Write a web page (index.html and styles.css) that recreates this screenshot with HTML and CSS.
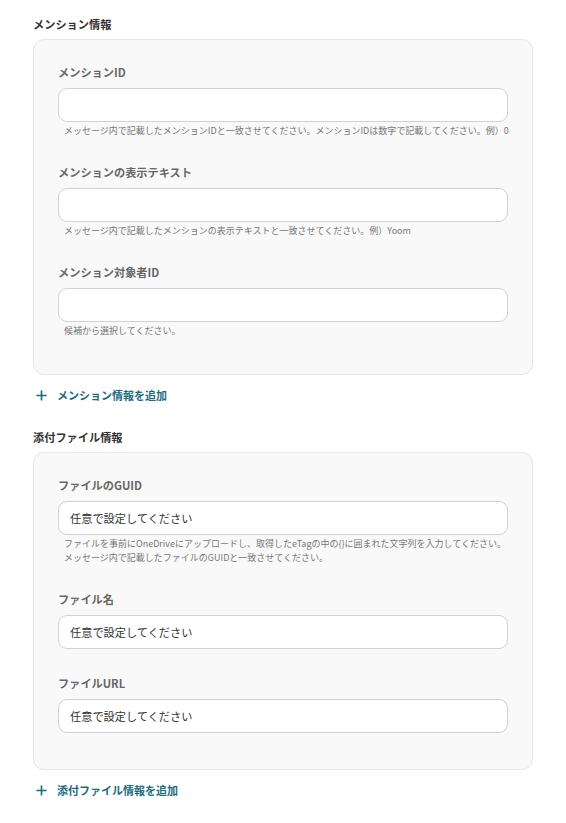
FILE: index.html
```html
<!DOCTYPE html>
<html lang="ja">
<head>
<meta charset="utf-8">
<link rel="stylesheet" href="styles.css">
</head>
<body>
<div class="page">
  <section class="group">
    <h2 class="group-title">メンション情報</h2>
    <div class="card">
      <div class="field">
        <label class="field-label">メンションID</label>
        <div class="input"></div>
        <p class="help">メッセージ内で記載したメンションIDと一致させてください。メンションIDは数字で記載してください。例）0</p>
      </div>
      <div class="field">
        <label class="field-label">メンションの表示テキスト</label>
        <div class="input"></div>
        <p class="help">メッセージ内で記載したメンションの表示テキストと一致させてください。例）Yoom</p>
      </div>
      <div class="field">
        <label class="field-label">メンション対象者ID</label>
        <div class="input"></div>
        <p class="help">候補から選択してください。</p>
      </div>
    </div>
    <a class="add-link">
      <svg class="plus" viewBox="0 0 12 12" width="12" height="12"><path d="M6 0.5v11M0.5 6h11" stroke="currentColor" stroke-width="1.8" fill="none"/></svg>
      <span>メンション情報を追加</span>
    </a>
  </section>

  <section class="group">
    <h2 class="group-title">添付ファイル情報</h2>
    <div class="card">
      <div class="field">
        <label class="field-label">ファイルのGUID</label>
        <div class="input"><span class="placeholder">任意で設定してください</span></div>
        <p class="help">ファイルを事前にOneDriveにアップロードし、取得したeTagの中の{}に囲まれた文字列を入力してください。<br>メッセージ内で記載したファイルのGUIDと一致させてください。</p>
      </div>
      <div class="field">
        <label class="field-label">ファイル名</label>
        <div class="input"><span class="placeholder">任意で設定してください</span></div>
      </div>
      <div class="field">
        <label class="field-label">ファイルURL</label>
        <div class="input"><span class="placeholder">任意で設定してください</span></div>
      </div>
    </div>
    <a class="add-link">
      <svg class="plus" viewBox="0 0 12 12" width="12" height="12"><path d="M6 0.5v11M0.5 6h11" stroke="currentColor" stroke-width="1.8" fill="none"/></svg>
      <span>添付ファイル情報を追加</span>
    </a>
  </section>
</div>
</body>
</html>
```

FILE: styles.css
```css
html, body {
  margin: 0;
  padding: 0;
  background: #ffffff;
}

body {
  font-family: "Noto Sans CJK JP", "Noto Sans", sans-serif;
  color: #333333;
}

.page {
  width: 500px;
  padding: 15px 33px 0;
}

.group {
  display: flex;
  flex-direction: column;
  margin-bottom: 24px;
}

.group-title {
  margin: 0 0 6px;
  font-size: 11.2px;
  line-height: 18px;
  font-weight: 700;
  color: #333333;
}

.card {
  background: #f9f9f9;
  border: 1px solid #e6e6e6;
  border-radius: 11px;
  padding: 23px 24px 36px;
  display: flex;
  flex-direction: column;
  gap: 25px;
}

.field {
  display: flex;
  flex-direction: column;
}

.field-label {
  font-size: 11.2px;
  line-height: 18px;
  font-weight: 700;
  color: #676767;
  margin-bottom: 7px;
}

.input {
  height: 32px;
  border: 1px solid #cdd1d9;
  border-radius: 9px;
  background: #ffffff;
  display: flex;
  align-items: center;
  padding: 0 11px;
}

.placeholder {
  font-size: 11.2px;
  color: #333333;
}

.help {
  margin: 2px 0 0 6px;
  font-size: 9px;
  line-height: 14px;
  color: #777777;
  white-space: nowrap;
}

.add-link {
  margin-top: 11px;
  display: flex;
  align-items: center;
  gap: 10px;
  padding-left: 3px;
  height: 18px;
  color: #1b6b7e;
  font-size: 11px;
  font-weight: 700;
}

.plus {
  display: block;
  width: 11px;
  height: 11px;
}
```
